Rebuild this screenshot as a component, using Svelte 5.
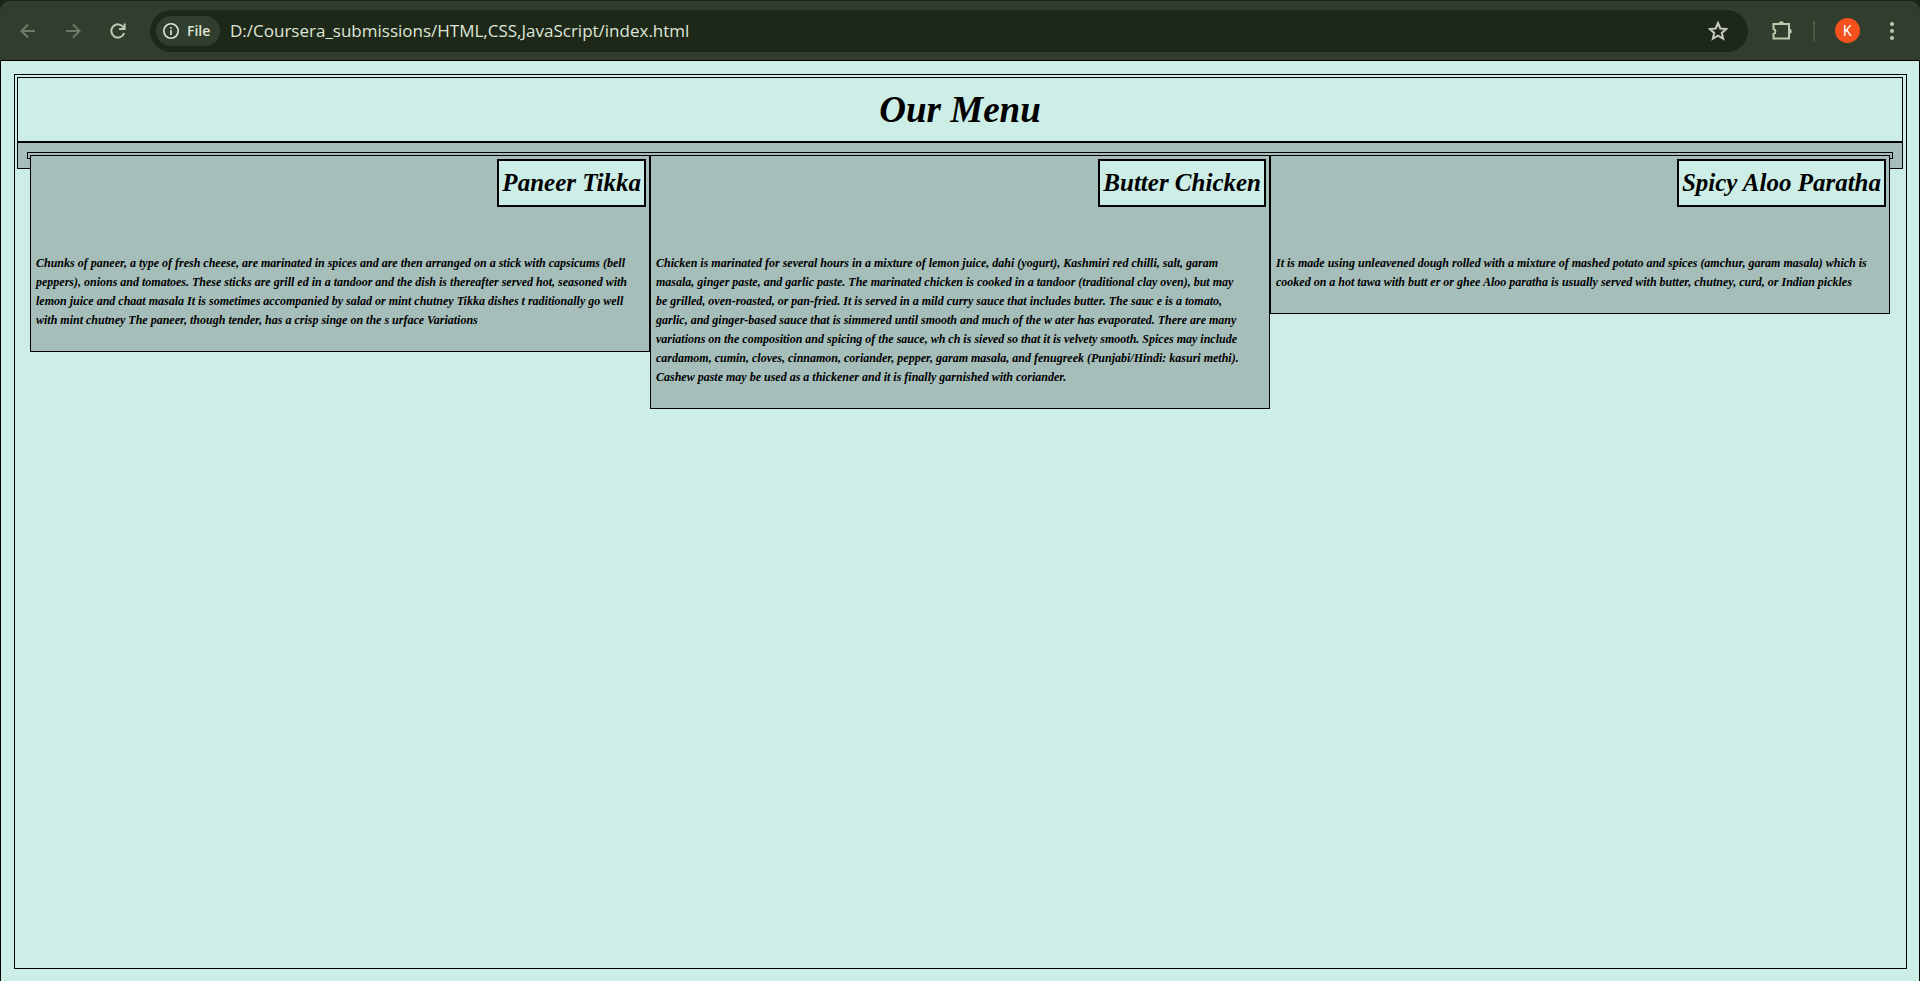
<script>
  const dishes = [
    {
      name: 'Paneer Tikka',
      lines: [
        'Chunks of paneer, a type of fresh cheese, are marinated in spices and are then arranged on a stick with capsicums (bell',
        'peppers), onions and tomatoes. These sticks are grill ed in a tandoor and the dish is thereafter served hot, seasoned with',
        'lemon juice and chaat masala It is sometimes accompanied by salad or mint chutney Tikka dishes t raditionally go well',
        'with mint chutney The paneer, though tender, has a crisp singe on the s urface Variations'
      ]
    },
    {
      name: 'Butter Chicken',
      lines: [
        'Chicken is marinated for several hours in a mixture of lemon juice, dahi (yogurt), Kashmiri red chilli, salt, garam',
        'masala, ginger paste, and garlic paste. The marinated chicken is cooked in a tandoor (traditional clay oven), but may',
        'be grilled, oven-roasted, or pan-fried. It is served in a mild curry sauce that includes butter. The sauc e is a tomato,',
        'garlic, and ginger-based sauce that is simmered until smooth and much of the w ater has evaporated. There are many',
        'variations on the composition and spicing of the sauce, wh ch is sieved so that it is velvety smooth. Spices may include',
        'cardamom, cumin, cloves, cinnamon, coriander, pepper, garam masala, and fenugreek (Punjabi/Hindi: kasuri methi).',
        'Cashew paste may be used as a thickener and it is finally garnished with coriander.'
      ]
    },
    {
      name: 'Spicy Aloo Paratha',
      lines: [
        'It is made using unleavened dough rolled with a mixture of mashed potato and spices (amchur, garam masala) which is',
        'cooked on a hot tawa with butt er or ghee Aloo paratha is usually served with butter, chutney, curd, or Indian pickles'
      ]
    }
  ];
  let address = $state('D:/Coursera_submissions/HTML,CSS,JavaScript/index.html');
</script>

<div class="window">
  <header class="toolbar">
    <div class="nav">
      <button class="dim" aria-label="Back"><svg viewBox="0 0 16 16"><path d="M15 8H2M8 1.500 1.500 8l6.500 6.500" /></svg></button>
      <button class="dim" aria-label="Forward"><svg viewBox="0 0 16 16"><path d="M1 8h13M8 1.500l6.500 6.500L8 14.500" /></svg></button>
      <button aria-label="Reload"><svg viewBox="0 0 16 16"><path d="M13.600 4.600A6.600 6.600 0 1 0 14.200 10M14.600 .5v5.500H9" /></svg></button>
    </div>
    <div class="omnibox">
      <button class="chip">
        <svg viewBox="0 0 16 16"><circle cx="8" cy="8" r="7.200" /><path d="M8 7v5M8 4v1.800" /></svg>
        <span>File</span>
      </button>
      <input aria-label="Address" bind:value={address} />
      <button class="star" aria-label="Bookmark"><svg viewBox="0 0 20 20"><path d="M10 2l2.300 5.500 6 .5-4.500 3.900 1.400 5.900L10 14.700l-5.200 3.100 1.400-5.900L1.700 8l6-.5z" /></svg></button>
    </div>
    <div class="tools">
      <button class="ext" aria-label="Extensions"><svg viewBox="0 0 22 22"><path d="M3 4h15v14.500H2.500v-4.500a2.600 2.600 0 0 0 0-5V4z" /><path class="solid" d="M7.500 4a2.700 2.700 0 0 1 5.400 0zM18 8.500a2.700 2.700 0 0 1 0 5.400z" /></svg></button>
      <span class="divider"></span>
      <button class="avatar" aria-label="Profile">K</button>
      <button class="more" aria-label="More"><svg viewBox="0 0 4 18"><circle cx="2" cy="2" r="2" /><circle cx="2" cy="9" r="2" /><circle cx="2" cy="16" r="2" /></svg></button>
    </div>
  </header>

  <div class="page">
    <main>
      <h1>Our Menu</h1>
      <section class="band">
        <div class="row">
          {#each dishes as dish}
            <article>
              <h2>{dish.name}</h2>
              <p>{#each dish.lines as line}<span>{line}</span>{/each}</p>
            </article>
          {/each}
        </div>
      </section>
    </main>
  </div>
</div>

<style>
  :global(body) { margin: 0; background: #1a2616; }
  * { box-sizing: border-box; }
  .window { min-height: 100vh; display: flex; flex-direction: column; }
  button { border: 0; padding: 0; background: none; color: #b9ccb0; display: flex; align-items: center; justify-content: center; }
  svg { fill: none; stroke: currentColor; stroke-width: 2; display: block; }
  .toolbar { height: 59px; margin-top: 1px; padding: 0 26px 0 20px; display: flex; align-items: center; background: #323e2d; border-radius: 10px 10px 0 0; font-family: "Open Sans", sans-serif; }
  .nav { display: flex; gap: 29px; }
  .nav svg { width: 16px; height: 16px; }
  .nav .dim { color: #6f7b69; }
  .omnibox { flex: 1; height: 42px; margin-left: 24px; padding: 0 20px 0 6px; display: flex; align-items: center; background: #1e2819; border-radius: 21px; }
  .chip { height: 30px; width: 64px; padding-left: 7px; gap: 8px; justify-content: flex-start; border-radius: 15px; background: #323e2d; color: #dfe6d8; font: 600 14px "Open Sans", sans-serif; }
  .chip svg { width: 16px; height: 16px; stroke-width: 1.600; }
  input { flex: 1; min-width: 0; margin-left: 10px; padding: 0; border: 0; outline: 0; background: none; color: #dfe6d8; font: 17px "Open Sans", sans-serif; }
  .star { color: #c4cbbf; }
  .star svg { width: 20px; height: 20px; }
  .tools { display: flex; align-items: center; margin-left: 23px; }
  .ext svg { width: 22px; height: 22px; }
  .ext .solid { fill: currentColor; stroke: none; }
  .divider { width: 2px; height: 20px; margin: 0 20px; background: #4b5a43; }
  .avatar { width: 25px; height: 25px; border-radius: 50%; background: #f4511e; color: #fff; font: 14px Roboto, sans-serif; }
  .more { margin-left: 30px; }
  .more svg { width: 4px; height: 18px; fill: currentColor; stroke: none; }
  .page { flex: 1; display: flex; padding: 13px 12px 12px 13px; border: 1px solid #000; border-bottom: 0; background: #cceee6; color: #000; font-family: "Brush Script MT", "Liberation Serif", serif; font-style: italic; font-weight: 700; }
  main { flex: 1; min-width: 0; padding: 2px 3px 2px 2px; border: 1px solid #000; }
  h1 { margin: 0; height: 65px; border: 1px solid #000; font-size: 37px; line-height: 63px; text-align: center; }
  .band { height: 27px; padding: 9px; border: 1px solid #000; background: #a6beba; }
  .row { height: 7px; padding: 2px; border: 1px solid #000; display: grid; grid-template-columns: repeat(3, minmax(0, 1fr)); align-items: start; }
  article { padding: 3px 3px 21px; border: 1px solid #000; background: #a6beba; display: flex; flex-direction: column; }
  h2 { align-self: flex-end; margin: 0; padding: 0 3px; height: 48px; border: 2px solid #000; background: #cceee6; font-size: 25px; line-height: 44px; white-space: nowrap; }
  p { margin: 47px 2px 0; font-size: 12px; line-height: 19px; }
  p span { display: block; white-space: nowrap; }
</style>
